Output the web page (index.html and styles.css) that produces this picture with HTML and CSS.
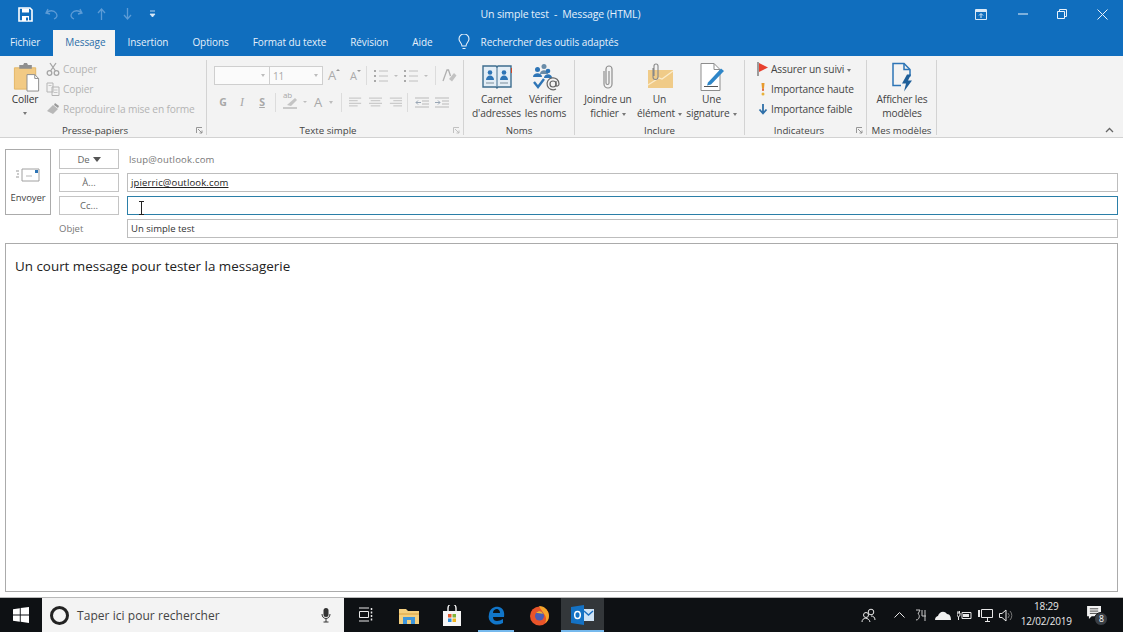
FILE: index.html
```html
<!DOCTYPE html>
<html lang="fr">
<head>
<meta charset="utf-8">
<title>Un simple test - Message (HTML)</title>
<link rel="stylesheet" href="styles.css">
</head>
<body>
<div class="app">
  <header class="titlebar">
    <div class="qat">
      <svg class="q-save" width="15" height="15" viewBox="0 0 15 15"><path d="M1 1h11l2 2v11H1z" fill="none" stroke="#fff" stroke-width="1.6"/><path d="M4 1.500h7v4H4z" fill="#fff"/><path d="M4 9h7v5H4z" fill="#fff"/><path d="M8 10.500h2v3H8z" fill="#106ebe"/></svg>
      <svg class="q-undo" width="13" height="12" viewBox="0 0 13 12"><path d="M3 1L1 5l4 1M1.500 5C4 2 9 2 11 5s.5 5-2 6" fill="none" stroke="#5c9bd6" stroke-width="1.300"/></svg>
      <svg class="q-redo" width="13" height="12" viewBox="0 0 13 12"><path d="M10 1l2 4-4 1M11.500 5C9 2 4 2 2 5s-.5 5 2 6" fill="none" stroke="#5c9bd6" stroke-width="1.300"/></svg>
      <svg class="q-up" width="9" height="12" viewBox="0 0 9 12"><path d="M4.500 12V2M1 5l3.500-4L8 5" fill="none" stroke="#5c9bd6" stroke-width="1.300"/></svg>
      <svg class="q-down" width="9" height="12" viewBox="0 0 9 12"><path d="M4.500 0v10M1 7l3.500 4L8 7" fill="none" stroke="#5c9bd6" stroke-width="1.300"/></svg>
      <svg class="q-more" width="7" height="8" viewBox="0 0 7 8"><path d="M1 1h5M1 4h5l-2.500 3z" fill="#dbe9f6" stroke="#dbe9f6" stroke-width=".8"/></svg>
    </div>
    <div class="doc-title">Un simple test &nbsp;-&nbsp; Message (HTML)</div>
    <div class="win">
      <svg class="w-ribbon" width="12" height="11" viewBox="0 0 12 11"><path d="M.5.500h11v10H.5z" fill="none" stroke="#dbe9f6"/><path d="M1 1h10v2H1z" fill="#dbe9f6"/><path d="M6 9V5M4 6.500L6 4.500l2 2" fill="none" stroke="#dbe9f6"/></svg>
      <svg class="w-min" width="10" height="2" viewBox="0 0 10 2"><path d="M0 1h10" stroke="#eaf2fa"/></svg>
      <svg class="w-max" width="10" height="10" viewBox="0 0 10 10"><path d="M.5 2.500h7v7h-7zM2.500 2.500v-2h7v7h-2" fill="none" stroke="#eaf2fa"/></svg>
      <svg class="w-close" width="11" height="11" viewBox="0 0 11 11"><path d="M.5.500l10 10M10.500.500l-10 10" stroke="#eaf2fa"/></svg>
    </div>
  </header>

  <nav class="tabs">
    <span class="tab tab-file">Fichier</span>
    <span class="tab tab-active">Message</span>
    <span class="tab">Insertion</span>
    <span class="tab">Options</span>
    <span class="tab">Format du texte</span>
    <span class="tab">Révision</span>
    <span class="tab">Aide</span>
    <span class="tell">
      <svg width="12" height="16" viewBox="0 0 12 16"><path d="M4 12c0-3-3-4-3-7a5 5 0 0 1 10 0c0 3-3 4-3 7zM4.500 14.500h3" fill="none" stroke="#eaf2fa" stroke-width="1.100"/></svg>
      Rechercher des outils adaptés
    </span>
  </nav>

  <section class="ribbon">
    <div class="group g-clip">
      <div class="g-body row-body">
        <div class="big big-paste">
          <svg class="paste-ic" width="28" height="31" viewBox="0 0 28 31"><path d="M1 6h22v22H1z" fill="#f2ca84" stroke="#e3b566"/><path d="M6 3h4l1-2h3l1 2h4v4H6z" fill="#8f8f8f"/><path d="M14 13h8l4 4v13H14z" fill="#fff" stroke="#8d8d8d"/><path d="M22 13v4h4" fill="none" stroke="#8d8d8d"/></svg>
          <span class="big-label dark">Coller</span>
          <i class="caret caret-paste"></i>
        </div>
        <div class="small-list">
          <div class="small off">
            <svg width="14" height="14" viewBox="0 0 14 14"><circle cx="3.500" cy="11" r="2.300" fill="none" stroke="#a5a5a5" stroke-width="1.300"/><circle cx="10.500" cy="11" r="2.300" fill="none" stroke="#a5a5a5" stroke-width="1.300"/><path d="M4.500 9L10 1M9.500 9L4 1" stroke="#a5a5a5" stroke-width="1.300"/></svg>
            Couper
          </div>
          <div class="small off">
            <svg width="14" height="14" viewBox="0 0 14 14"><path d="M1 1h6v9H1zM6 5h7v8.500H6z" fill="#f3f3f3" stroke="#b5b5b5"/><path d="M7.500 8h4M7.500 10.500h4M2.500 3.500h3" stroke="#c5c5c5"/></svg>
            Copier
          </div>
          <div class="small off">
            <svg width="14" height="14" viewBox="0 0 14 14"><path d="M1 9l6-6 5 4-5 5z" fill="#b8b8b8"/><path d="M9 1l4 3-1 2-4-3z" fill="#999"/></svg>
            Reproduire la mise en forme
          </div>
        </div>
      </div>
      <div class="g-label label-clip">Presse-papiers<svg class="launch" width="7" height="7" viewBox="0 0 7 7"><path d="M.5 6V.5H6M2 2l4 4M6 3.500V6H3.500" fill="none" stroke="#8c8c8c" stroke-width=".9"/></svg></div>
    </div>

    <div class="group g-text">
      <div class="g-body text-body">
        <div class="text-row">
          <span class="box box-font"><i class="caret caret-off"></i></span>
          <span class="box box-size">11<i class="caret caret-off"></i></span>
          <span class="ic big-a">A<i class="tick tick-up"></i></span>
          <span class="ic small-a">A<i class="tick tick-down"></i></span>
          <i class="sep sep-1"></i>
          <svg class="list-ic list-1" width="26" height="14" viewBox="0 0 26 14"><path d="M1 2h2M1 7h2M1 12h2" stroke="#a9a9a9" stroke-width="2"/><path d="M6 2h9M6 7h9M6 12h9" stroke="#c0c0c0"/><path d="M21 6h4l-2 2z" fill="#bdbdbd"/></svg>
          <svg class="list-ic list-2" width="26" height="14" viewBox="0 0 26 14"><path d="M1 2h2M1 7h2M1 12h2" stroke="#a9a9a9" stroke-width="2"/><path d="M6 2h9M6 7h9M6 12h9" stroke="#c0c0c0"/><path d="M21 6h4l-2 2z" fill="#bdbdbd"/></svg>
          <i class="sep sep-2"></i>
          <svg class="clear-ic" width="15" height="14" viewBox="0 0 15 14"><path d="M1 12L5 1h1.500l2 6" fill="none" stroke="#b0b0b0" stroke-width="1.300"/><path d="M7 10l5-6 2.500 2.500-4.500 6z" fill="#c2c2c2"/></svg>
        </div>
        <div class="text-row row-fmt">
          <span class="fmt fmt-g">G</span>
          <span class="fmt fmt-i">I</span>
          <span class="fmt fmt-s">S</span>
          <i class="sep sep-3"></i>
          <span class="mark-ic"><span class="mark-text">ab</span><svg width="26" height="14" viewBox="0 0 26 14"><path d="M5 10L13 3l2 2-6 6z" fill="#c4c4c4"/><path d="M1 13h14" stroke="#bbb" stroke-width="1.500"/><path d="M21 6h4l-2 2z" fill="#bdbdbd"/></svg></span>
          <span class="color-a">A</span>
          <i class="caret caret-off caret-color"></i>
          <i class="sep sep-4"></i>
          <svg class="al al-1" width="13" height="10" viewBox="0 0 15 11"><path d="M0 1h14M0 4h10M0 7h14M0 10h10" stroke="#b9b9b9"/></svg>
          <svg class="al al-2" width="13" height="10" viewBox="0 0 15 11"><path d="M0 1h15M2 4h11M0 7h15M2 10h11" stroke="#b9b9b9"/></svg>
          <svg class="al al-3" width="13" height="10" viewBox="0 0 15 11"><path d="M1 1h14M5 4h10M1 7h14M5 10h10" stroke="#b9b9b9"/></svg>
          <i class="sep sep-5"></i>
          <svg class="al al-4" width="14" height="11" viewBox="0 0 14 11"><path d="M0 1h14M7 4h7M7 7h7M0 10h14" stroke="#b9b9b9"/><path d="M1 5.500h5M3 3.500l-2 2 2 2" fill="none" stroke="#9aa7b5"/></svg>
          <svg class="al al-5" width="14" height="11" viewBox="0 0 14 11"><path d="M0 1h14M7 4h7M7 7h7M0 10h14" stroke="#b9b9b9"/><path d="M0 5.500h5M3 3.500l2 2-2 2" fill="none" stroke="#9aa7b5"/></svg>
        </div>
      </div>
      <div class="g-label label-text">Texte simple<svg class="launch launch-off" width="7" height="7" viewBox="0 0 7 7"><path d="M.5 6V.5H6M2 2l4 4M6 3.500V6H3.500" fill="none" stroke="#bbb" stroke-width=".9"/></svg></div>
    </div>

    <div class="group g-names">
      <div class="g-body row-body">
        <div class="big b-carnet">
          <svg width="30" height="28" viewBox="0 0 30 28"><path d="M1 3h13l1 1 1-1h13v21H16l-1 1-1-1H1z" fill="#e4eef6" stroke="#3e6d8e" stroke-width="1.400"/><path d="M15 4v20" stroke="#3e6d8e"/><circle cx="8" cy="9.500" r="2.300" fill="#2e75b6"/><path d="M4 17c0-6 8-6 8 0z" fill="#2e75b6"/><circle cx="22" cy="9.500" r="2.300" fill="#2e75b6"/><path d="M18 17c0-6 8-6 8 0z" fill="#2e75b6"/><path d="M4 20h8M18 20h8" stroke="#7d8f9c"/><path d="M29 5h1v5h-1z" fill="#d24726"/></svg>
          <span class="big-label">Carnet<br>d'adresses</span>
        </div>
        <div class="big b-verify">
          <svg width="28" height="28" viewBox="0 0 28 28"><circle cx="12" cy="3.500" r="2.500" fill="#6a8ca8"/><path d="M8 11c0-5 8-5 8 0z" fill="#6a8ca8"/><circle cx="5.500" cy="6.500" r="2.500" fill="#2e75b6"/><path d="M1 14c0-5 9-5 9 0z" fill="#2e75b6"/><circle cx="16" cy="8" r="2.300" fill="#2e75b6"/><path d="M12 15c0-5 8-5 8 0z" fill="#2e75b6"/><path d="M2 19l4 5 6-8" fill="none" stroke="#2e75b6" stroke-width="2.400"/><circle cx="21" cy="21" r="3" fill="none" stroke="#666" stroke-width="1.200"/><path d="M24 18v4c0 2 3 1 3-1a6 6 0 1 0-3 5" fill="none" stroke="#666" stroke-width="1.200"/></svg>
          <span class="big-label">Vérifier<br>les noms</span>
        </div>
      </div>
      <div class="g-label">Noms</div>
    </div>

    <div class="group g-incl">
      <div class="g-body row-body">
        <div class="big b-join">
          <svg width="14" height="28" viewBox="0 0 14 28"><path d="M3 8v13a4 4 0 0 0 8 0V6a3 3 0 0 0-6 0v14a1.500 1.500 0 0 0 3 0V8" fill="none" stroke="#8f8f8f" stroke-width="1.200"/></svg>
          <span class="big-label">Joindre un<br>fichier<i class="caret"></i></span>
        </div>
        <div class="big b-item">
          <svg width="28" height="28" viewBox="0 0 28 28"><path d="M2 7h25v18H2z" fill="#f0cb88"/><path d="M2 22l11-7 3 1 11-8" fill="none" stroke="#fbeccb" stroke-width="1.200"/><path d="M7 5v9a2.500 2.500 0 0 0 5 0V3a2 2 0 0 0-4 0v10" fill="none" stroke="#888" stroke-width="1.100"/></svg>
          <span class="big-label">Un<br>élément<i class="caret"></i></span>
        </div>
        <div class="big b-sign">
          <svg width="26" height="29" viewBox="0 0 26 29"><path d="M2 1h13l6 6v21H2z" fill="#fff" stroke="#8d8d8d"/><path d="M15 1v6h6" fill="none" stroke="#8d8d8d"/><path d="M9 20L22 6l3 2.500L12 22l-4 1z" fill="#2e86c8"/><path d="M5 24h14" stroke="#555"/></svg>
          <span class="big-label">Une<br>signature<i class="caret"></i></span>
        </div>
      </div>
      <div class="g-label">Inclure</div>
    </div>

    <div class="group g-tags">
      <div class="g-body small-list tag-list">
        <div class="small">
          <svg width="12" height="14" viewBox="0 0 12 14"><path d="M1 0v14" stroke="#777" stroke-width="1.400"/><path d="M2 1l9 4.500L2 10z" fill="#e8412f"/></svg>
          <span>Assurer un suivi<i class="caret"></i></span>
        </div>
        <div class="small">
          <svg width="12" height="14" viewBox="0 0 12 14"><path d="M4.500 1h3L7 6.500H5z" fill="#e79a2c"/><path d="M5 6.500h2L6.700 9H5.300z" fill="#e15a2a"/><circle cx="6" cy="12" r="1.500" fill="#e8b23a"/></svg>
          Importance haute
        </div>
        <div class="small">
          <svg width="12" height="14" viewBox="0 0 12 14"><path d="M6 2v9M2.500 7.500L6 11.500l3.500-4" fill="none" stroke="#2e6fa8" stroke-width="1.800"/></svg>
          Importance faible
        </div>
      </div>
      <div class="g-label label-tags">Indicateurs<svg class="launch" width="7" height="7" viewBox="0 0 7 7"><path d="M.5 6V.5H6M2 2l4 4M6 3.500V6H3.500" fill="none" stroke="#8c8c8c" stroke-width=".9"/></svg></div>
    </div>

    <div class="group g-tpl">
      <div class="g-body row-body">
        <div class="big b-tpl">
          <svg width="22" height="29" viewBox="0 0 22 29"><path d="M10 23H2V1h11l6 6v7" fill="none" stroke="#2e75b6" stroke-width="1.500"/><path d="M13 1v6h6" fill="none" stroke="#2e75b6" stroke-width="1.500"/><path d="M16 12l-5 9h4l-2 8 8-11h-4l3-6z" fill="#1f5f99"/></svg>
          <span class="big-label">Afficher les<br>modèles</span>
        </div>
      </div>
      <div class="g-label">Mes modèles</div>
    </div>

    <svg class="collapse" width="9" height="6" viewBox="0 0 9 6"><path d="M1 5l3.500-3.500L8 5" fill="none" stroke="#666" stroke-width="1.300"/></svg>
  </section>

  <section class="compose">
    <button class="send">
      <svg width="24" height="14" viewBox="0 0 24 14"><path d="M6 1h17v12H6z" fill="#fff" stroke="#a0a0a0"/><path d="M19 2h3v3h-3z" fill="#2e75b6"/><path d="M10 8h6" stroke="#b8b8b8"/><path d="M0 3h3M1 6h2M0 9h3" stroke="#999"/></svg>
      Envoyer
    </button>
    <div class="fields">
      <div class="field-row row-de">
        <span class="addr-btn">De <i class="de-caret"></i></span>
        <span class="from">lsup@outlook.com</span>
      </div>
      <div class="field-row row-to">
        <span class="addr-btn">À...</span>
        <span class="input input-to"><u>jpierric@outlook.com</u></span>
      </div>
      <div class="field-row row-cc">
        <span class="addr-btn">Cc...</span>
        <span class="input input-focus"></span>
      </div>
      <div class="field-row row-obj">
        <span class="obj-label">Objet</span>
        <span class="input">Un simple test</span>
      </div>
    </div>
    <svg class="ibeam" width="7" height="14" viewBox="0 0 7 14"><path d="M1 .5h5M1 13.500h5M3.500 1v12" fill="none" stroke="#222"/></svg>
  </section>

  <main class="message">Un court message pour tester la messagerie</main>

  <footer class="taskbar">
    <div class="start"><svg width="16" height="16" viewBox="0 0 16 16"><path d="M0 2.300l6.800-1v6.200H0zM7.700 1.100L16 0v7.500H7.700zM0 8.400h6.800v6.300L0 13.700zM7.700 8.400H16V16l-8.300-1.200z" fill="#fff"/></svg></div>
    <div class="search">
      <i class="cortana"></i>
      <span class="search-text">Taper ici pour rechercher</span>
      <svg class="mic" width="10" height="16" viewBox="0 0 10 16"><rect x="2.500" y="1" width="5" height="9" rx="2.500" fill="#333"/><path d="M1 7c0 6 8 6 8 0M5 12v3M2.500 15h5" fill="none" stroke="#333"/></svg>
    </div>
    <div class="tile"><svg width="15" height="16" viewBox="0 0 15 16"><path d="M1 1h10M1 14h10" stroke="#e8e8e8"/><path d="M1.500 4.500h9v6h-9z" fill="none" stroke="#e8e8e8"/><path d="M13.500 1v14" stroke="#e8e8e8" stroke-dasharray="2 1.500" stroke-width="1.500"/></svg></div>
    <div class="tile"><svg width="20" height="17" viewBox="0 0 20 17"><path d="M0 2h7l2 2h11v13H0z" fill="#f4cf7e"/><path d="M0 6h20v2H0z" fill="#e6b85f"/><path d="M4 10h12v7H4z" fill="#3e96dc"/><path d="M8 13h4v4H8z" fill="#f4cf7e"/></svg></div>
    <div class="tile"><svg width="20" height="21" viewBox="0 0 20 21"><path d="M1 6h18v15H1z" fill="#f6f6f6"/><path d="M6 6V3a4 4 0 0 1 8 0v3" fill="none" stroke="#f6f6f6" stroke-width="1.400"/><path d="M6 9h3.500v3.500H6z" fill="#e8582b"/><path d="M10.500 9H14v3.500h-3.500z" fill="#7fb53a"/><path d="M6 13.500h3.500V17H6z" fill="#2f8fdc"/><path d="M10.500 13.500H14V17h-3.500z" fill="#f2b61f"/></svg></div>
    <div class="tile tile-open"><svg width="18" height="19" viewBox="0 0 18 19"><path d="M2 8c1-6 6-8 10-7 4 1 6 5 5 10H6c0 3 2 4 4 4 2 0 4-1 6-2v4c-4 2-8 2-11 0C2 15 1 12 2 8zm4-1h7c0-3-2-4-3-4-2 0-4 1-4 4z" fill="#1176c9"/></svg></div>
    <div class="tile"><svg width="21" height="21" viewBox="0 0 21 21"><circle cx="10.500" cy="11" r="9.500" fill="#e8542a"/><path d="M10 1c6 0 10 5 10 10 0 3-2 6-4 7 2-3 1-7-1-9-1-2-3-4-5-8z" fill="#f4a52a"/><circle cx="10.500" cy="11" r="4.500" fill="#4a5db5"/><path d="M7 8c3-3 6-2 7 1-2-1-5-1-7-1z" fill="#f4b52c"/></svg></div>
    <div class="tile tile-active"><svg width="23" height="20" viewBox="0 0 23 20"><path d="M12 4h11v12H12z" fill="#cfe3f5"/><path d="M13 6l4.500 4L22 6" fill="none" stroke="#1a6fc0" stroke-width="1.400"/><path d="M0 2l13-2v20L0 18z" fill="#1472c4"/><ellipse cx="6.500" cy="10" rx="2.800" ry="3.500" fill="none" stroke="#fff" stroke-width="1.500"/></svg></div>
    <div class="tray">
      <svg class="t-people" width="15" height="15" viewBox="0 0 15 15"><circle cx="10" cy="4" r="2.800" fill="none" stroke="#e8e8e8"/><circle cx="5" cy="7" r="2.500" fill="none" stroke="#e8e8e8"/><path d="M1 14c0-5 7-5 8 0M10 8c2 0 4 1 4 4" fill="none" stroke="#e8e8e8"/></svg>
      <svg class="t-chev" width="11" height="6" viewBox="0 0 11 6"><path d="M.5 5.500l5-5 5 5" fill="none" stroke="#e8e8e8"/></svg>
      <svg class="t-ime" width="12" height="13" viewBox="0 0 12 13"><path d="M1 1h4l-2 4c2 0 2 6-2 6M7 1v6h4M10 1v11" fill="none" stroke="#c8c8c8"/></svg>
      <svg class="t-cloud" width="16" height="10" viewBox="0 0 16 10"><path d="M0 10c0-3 2-4 3-4 1-4 6-6 9-2 3 0 4 3 4 6z" fill="#f0f0f0"/></svg>
      <svg class="t-batt" width="15" height="12" viewBox="0 0 15 12"><path d="M5 3.500h9v6H5z" fill="none" stroke="#e8e8e8"/><path d="M6 5h6v3H6z" fill="#e8e8e8"/><path d="M0 4h3v2a1.500 1.500 0 0 1-3 0zM1 2v2M2.500 2v2M1.500 8v3" fill="none" stroke="#e8e8e8"/></svg>
      <svg class="t-net" width="15" height="13" viewBox="0 0 15 13"><path d="M3.500.500h11v8h-11zM7 12.500h5M9.500 9v3" fill="none" stroke="#e8e8e8"/><path d="M0 1h2v7H0z" fill="#e8e8e8"/></svg>
      <svg class="t-vol" width="14" height="13" viewBox="0 0 14 13"><path d="M.5 4.500h2.500L7 1v11L3 8.500H.5z" fill="none" stroke="#e8e8e8"/><path d="M9 4a3.500 3.500 0 0 1 0 5M11 2a6.500 6.500 0 0 1 0 9" fill="none" stroke="#777"/></svg>
      <div class="clock"><span>18:29</span><span>12/02/2019</span></div>
      <div class="notif">
        <svg width="15" height="13" viewBox="0 0 16 14"><path d="M0 0h15v11H5l-3 3v-3H0z" fill="#f2f2f2"/><path d="M3 3h9M3 5.500h9M3 8h9" stroke="#444"/></svg>
        <span class="badge">8</span>
      </div>
    </div>
  </footer>
</div>
</body>
</html>
```

FILE: styles.css
```css
* { box-sizing: border-box; }
html, body { margin: 0; padding: 0; }
body { font-family: "Open Sans", "Noto Sans", sans-serif; background: #fff; color: #444; overflow: hidden; }
i { font-style: normal; }
svg { display: block; flex: none; }

.app { width: 1123px; height: 632px; display: flex; flex-direction: column; }

/* Title bar */
.titlebar { height: 28px; flex: none; background: #106ebe; display: grid; grid-template-columns: 1fr auto 1fr; align-items: center; color: #e6f0fa; font-size: 10.500px; }
.qat { display: flex; align-items: center; padding-left: 18px; }
.q-undo { margin-left: 12px; }
.q-redo { margin-left: 12px; }
.q-up { margin-left: 14px; }
.q-down { margin-left: 17px; }
.q-more { margin-left: 17px; }
.doc-title { letter-spacing: -.15px; white-space: nowrap; margin-right: 2px; }
.win { display: flex; align-items: center; justify-content: flex-end; padding-right: 15px; }
.w-min { margin-left: 31px; }
.w-max { margin-left: 29px; }
.w-close { margin-left: 30px; }

/* Tabs */
.tabs { height: 28px; flex: none; background: #106ebe; display: flex; align-items: stretch; font-size: 10px; color: #e6f0fa; letter-spacing: -.08px; }
.tab { display: flex; align-items: center; padding: 0 12px; white-space: nowrap; }
.tab-file { padding: 0 13px 0 10px; }
.tab-active { background: #f3f3f3; color: #2b6ea8; margin-top: 2px; padding: 0 10px 2px 12px; }
.tell { display: flex; align-items: center; gap: 11px; margin-left: 13px; white-space: nowrap; }

/* Ribbon */
.ribbon { height: 82px; flex: none; background: #f3f3f3; border-bottom: 1px solid #d2d2d2; display: flex; padding-top: 3px; position: relative; font-size: 10.200px; letter-spacing: -.15px; color: #444; }
.group { display: flex; flex-direction: column; height: 75px; border-right: 1px solid #d3d3d3; flex: none; margin-top: 1px; }
.g-body { flex: 1; min-height: 0; margin-top: -1px; }
.row-body { display: flex; }
.g-label { height: 14px; margin-bottom: -2px; flex: none; display: flex; align-items: center; justify-content: center; position: relative; color: #444; font-size: 9.700px; letter-spacing: 0; }
.launch { position: absolute; right: 3px; top: 4px; }
.g-clip { width: 207px; }
.g-text { width: 257px; }
.g-names { width: 111px; }
.g-incl { width: 170px; }
.g-tags { width: 122px; }
.g-tpl { width: 70px; }
.label-clip { padding-right: 16px; letter-spacing: -.05px; }
.label-text { padding-right: 14px; }
.label-tags { padding-right: 13px; }

.big { display: flex; flex-direction: column; align-items: center; flex: none; }
.big > svg { height: 33px; padding-top: 3px; box-sizing: border-box; }
.big-label { text-align: center; line-height: 14px; white-space: nowrap; }
.dark { color: #333; }
.big-paste { width: 50px; }
.paste-ic { margin-left: 4px; }
.b-carnet { width: 53px; margin-left: 6px; }
.b-verify { width: 45px; }
.b-join { width: 66px; }
.b-item { width: 37px; }
.b-sign { width: 67px; }
.b-tpl { width: 70px; }

.caret { display: inline-block; width: 0; height: 0; border: 2.500px solid transparent; border-top: 3px solid #777; border-bottom: 0; margin-left: 3px; vertical-align: middle; }
.caret-paste { margin: 6px 0 0; }
.caret-off { border-top-color: #bdbdbd; }

.small-list { display: flex; flex-direction: column; margin-left: -4px; }
.small { height: 20px; display: flex; align-items: center; gap: 3px; white-space: nowrap; }
.off { color: #b3b3b3; }
.tag-list { margin-left: 0; padding-left: 12px; }
.tag-list .small { gap: 2px; }

/* Texte simple */
.text-body { padding: 7px 0 0 7px; display: flex; flex-direction: column; gap: 7px; }
.text-row { display: flex; align-items: center; height: 19px; }
.row-fmt { height: 20px; }
.box { display: flex; align-items: center; justify-content: flex-end; height: 19px; background: #fbfbfb; border: 1px solid #cfcfcf; padding-right: 4px; color: #a9a9a9; font-size: 10px; }
.box .caret { margin-left: 0; }
.box-font { width: 55px; border-right: 0; }
.box-size { width: 54px; justify-content: space-between; padding-left: 3px; }
.ic { color: #ababab; display: flex; line-height: 1; }
.tick { width: 0; height: 0; border: 2px solid transparent; margin-left: 0; }
.tick-up { border-bottom: 2.500px solid #999; border-top: 0; }
.tick-down { border-top: 2.500px solid #999; border-bottom: 0; }
.big-a { font-size: 13px; margin-left: 5px; width: 15px; }
.small-a { font-size: 11px; margin-left: 7px; width: 13px; align-items: flex-start; }
.sep { width: 1px; height: 19px; background: #dcdcdc; flex: none; }
.sep-1 { margin-left: 3px; }
.list-1 { margin-left: 6px; }
.list-2 { margin-left: 4px; }
.sep-2 { margin-left: 6px; }
.clear-ic { margin-left: 6px; }
.fmt { width: 20px; text-align: center; color: #a8a8a8; font-size: 10.500px; font-weight: 700; flex: none; }
.fmt-g { margin-left: -1px; }
.fmt-i { font-family: "Liberation Serif", serif; font-style: italic; font-weight: 400; font-size: 12px; margin-left: -1px; }
.fmt-s { text-decoration: underline; }
.sep-3 { margin-left: 3px; }
.mark-ic { margin-left: 6px; position: relative; display: block; flex: none; }
.mark-text { position: absolute; left: 1px; top: -5px; font-size: 8px; line-height: 10px; color: #a8a8a8; }
.color-a { color: #a8a8a8; font-size: 13px; margin-left: 6px; width: 10px; line-height: 1; }
.caret-color { margin-left: 5px; }
.sep-4 { margin-left: 8px; }
.al-1 { margin-left: 7px; }
.al-2 { margin-left: 7px; }
.al-3 { margin-left: 7px; }
.sep-5 { margin-left: 5px; }
.al-4 { margin-left: 7px; }
.al-5 { margin-left: 6px; }

.collapse { position: absolute; right: 9px; bottom: 4px; }

/* Compose header */
.compose { flex: none; height: 105px; display: flex; padding: 11px 5px 0; position: relative; background: #fff; }
.send { width: 46px; height: 66px; flex: none; background: #fff; border: 1px solid #ababab; display: flex; flex-direction: column; align-items: center; padding: 18px 0 0; gap: 9px; font: 9.500px "Open Sans", sans-serif; letter-spacing: -.1px; color: #444; }
.fields { flex: 1; margin-left: 8px; display: flex; flex-direction: column; }
.field-row { display: flex; align-items: center; font-size: 9.500px; color: #333; }
.row-de { height: 20px; }
.row-to { height: 19px; margin-top: 4px; }
.row-cc { height: 19px; margin-top: 4px; }
.row-obj { height: 19px; margin-top: 4px; }
.addr-btn { width: 60px; height: 100%; flex: none; border: 1px solid #c4c4c4; background: #fff; display: flex; align-items: center; justify-content: center; gap: 3px; color: #666; }
.de-caret { width: 0; height: 0; border: 4px solid transparent; border-top: 5px solid #555; border-bottom: 0; }
.from { margin-left: 10px; color: #777; letter-spacing: .2px; }
.input { flex: 1; height: 100%; margin-left: 8px; border: 1px solid #bdbdbd; padding-left: 3px; display: flex; align-items: center; background: #fff; color: #333; }
.input-to { letter-spacing: .15px; color: #222; }
.input-focus { border-color: #2b7fa8; }
.obj-label { width: 60px; flex: none; color: #777; }
.ibeam { position: absolute; left: 138px; top: 63px; }

/* Message */
.message { flex: none; height: 349px; margin: 0 5px; border: 1px solid #ababab; padding: 12px 9px; font-size: 13.400px; line-height: 20px; color: #222; background: #fff; }

/* Taskbar */
.taskbar { margin-top: 5px; height: 35px; flex: none; background: #0e1114; border-top: 1px solid #b9b9b9; display: flex; align-items: stretch; }
.start { width: 42px; flex: none; display: flex; align-items: center; justify-content: center; }
.search { width: 302px; flex: none; background: #f3f3f3; display: flex; align-items: center; padding-left: 8px; color: #444; font-size: 12px; }
.cortana { width: 19px; height: 19px; border-radius: 50%; border: 3px solid #222; flex: none; }
.search-text { margin-left: 8px; flex: 1; letter-spacing: .05px; }
.mic { margin-right: 13px; }
.tile { width: 43.400px; flex: none; display: flex; align-items: center; justify-content: center; }
.tile-open { box-shadow: inset 0 -2px 0 #76b9ed; margin: 0 4px; width: 35.400px; }
.tile-active { background: #33373a; box-shadow: inset 0 -2px 0 #76b9ed; }
.tray { flex: 1; display: flex; align-items: center; color: #e8e8e8; padding-left: 257px; }
.t-chev { margin-left: 18px; }
.t-ime { margin-left: 10px; }
.t-cloud { margin-left: 8px; }
.t-batt { margin-left: 6px; }
.t-net { margin-left: 6px; }
.t-vol { margin-left: 6px; }
.clock { width: 62px; margin-left: 2px; margin-top: -2px; display: flex; flex-direction: column; align-items: center; font-size: 10px; line-height: 15px; letter-spacing: -.2px; }
.notif { margin-left: 10px; margin-top: -5px; position: relative; }
.badge { position: absolute; left: 7px; top: 6px; width: 14px; height: 14px; border-radius: 50%; background: #3a3f45; border: 1px solid #0e1114; color: #fff; font-size: 8.500px; line-height: 12px; text-align: center; }
```
